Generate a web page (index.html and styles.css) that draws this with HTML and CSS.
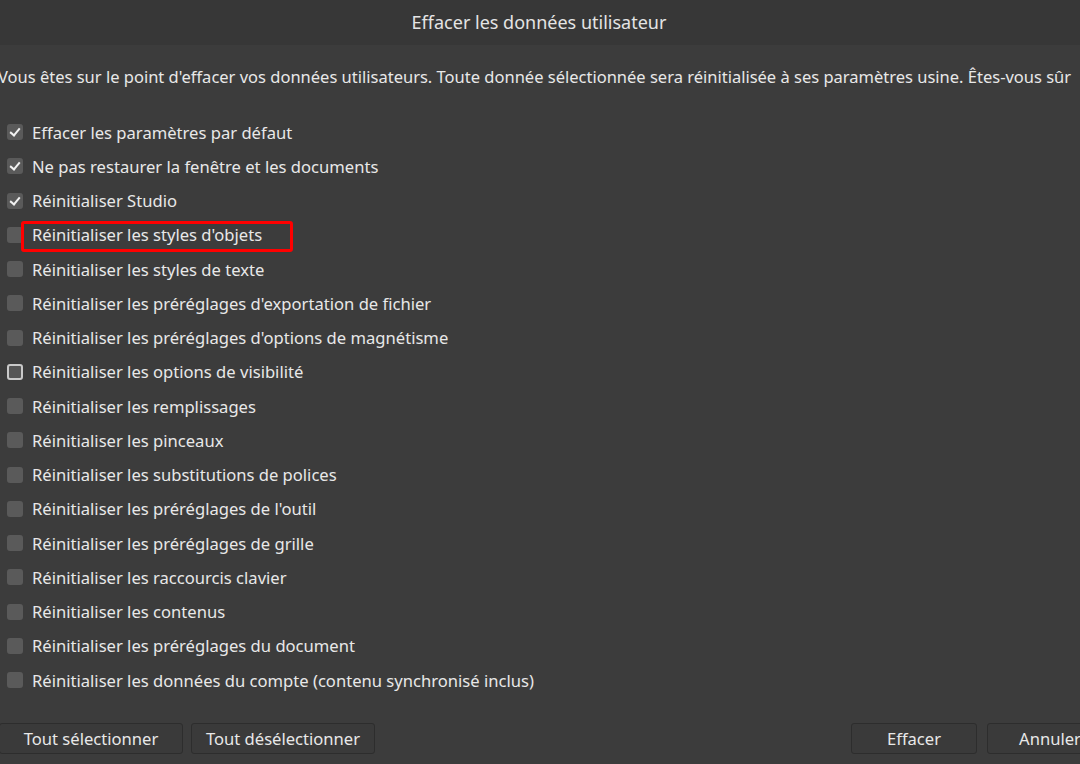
FILE: index.html
```html
<!DOCTYPE html>
<html lang="fr">
<head>
  <meta charset="UTF-8" />
  <title>Effacer les données utilisateur</title>
  <link rel="stylesheet" href="styles.css">
</head>
<body>
  <div class="dialogue">
    <header class="titre">Effacer les données utilisateur</header>

    <p class="avertissement">Vous êtes sur le point d'effacer vos données utilisateurs. Toute donnée sélectionnée sera réinitialisée à ses paramètres usine. Êtes-vous sûr</p>

    <ul class="options">
      <li><span class="case coche"></span>Effacer les paramètres par défaut</li>
      <li><span class="case coche"></span>Ne pas restaurer la fenêtre et les documents</li>
      <li><span class="case coche"></span>Réinitialiser Studio</li>
      <li><span class="case"></span><span class="cadre">Réinitialiser les styles d'objets</span></li>
      <li><span class="case"></span>Réinitialiser les styles de texte</li>
      <li><span class="case"></span>Réinitialiser les préréglages d'exportation de fichier</li>
      <li><span class="case"></span>Réinitialiser les préréglages d'options de magnétisme</li>
      <li><span class="case focus"></span>Réinitialiser les options de visibilité</li>
      <li><span class="case"></span>Réinitialiser les remplissages</li>
      <li><span class="case"></span>Réinitialiser les pinceaux</li>
      <li><span class="case"></span>Réinitialiser les substitutions de polices</li>
      <li><span class="case"></span>Réinitialiser les préréglages de l'outil</li>
      <li><span class="case"></span>Réinitialiser les préréglages de grille</li>
      <li><span class="case"></span>Réinitialiser les raccourcis clavier</li>
      <li><span class="case"></span>Réinitialiser les contenus</li>
      <li><span class="case"></span>Réinitialiser les préréglages du document</li>
      <li><span class="case"></span>Réinitialiser les données du compte (contenu synchronisé inclus)</li>
    </ul>

    <footer class="actions">
      <div class="groupe">
        <button>Tout sélectionner</button>
        <button>Tout désélectionner</button>
      </div>
      <div class="groupe">
        <button>Effacer</button>
        <button>Annuler</button>
      </div>
    </footer>
  </div>
</body>
</html>
```

FILE: styles.css
```css
body { margin: 0; background: #3c3c3c; color: #e8e8e8; font-family: 'Noto Sans', sans-serif; overflow: hidden; }
.dialogue { width: 1080px; height: 764px; }
.titre { height: 45px; background: #373737; text-align: center; font-size: 18px; line-height: 44px; color: #e4e4e4; padding-right: 2px; }
.avertissement { margin: 20px 0 0 -2px; white-space: nowrap; font-size: 16.5px; line-height: 24px; }
.options { list-style: none; margin: 26px 0 0; padding: 0 0 0 7px; }
.options li { display: flex; align-items: center; height: 34.25px; font-size: 16.6px; white-space: nowrap; }
.case { width: 16px; height: 16px; box-sizing: border-box; border-radius: 3px; background: #5a5a5a; margin-right: 9px; position: relative; flex: none; }
.case.coche::after { content: ''; position: absolute; left: 5px; top: 2px; width: 4px; height: 8px; border: solid #f2f2f2; border-width: 0 2px 2px 0; transform: rotate(40deg); }
.case.focus { border: 2px solid #c9c9c9; background: #555; }
/* surlignage rouge par-dessus la ligne */
.cadre { position: relative; }
.cadre::after { content: ''; position: absolute; left: -11px; right: -31px; top: -2px; bottom: -6px; border: 3px solid #ff0000; border-radius: 3px; }
.actions { display: flex; justify-content: space-between; width: 1114px; margin: 26px 0 0 -1px; }
.groupe { display: flex; gap: 8px; }
.groupe:last-child { gap: 10px; }
.actions button { height: 31px; border: 1px solid #2d2d2d; border-radius: 3px; background: #3a3a3a; color: #e8e8e8; font-family: 'Noto Sans', sans-serif; font-size: 16.6px; padding: 0; }
.groupe:first-child button { width: 184px; }
.groupe:last-child button { width: 126px; }
```
